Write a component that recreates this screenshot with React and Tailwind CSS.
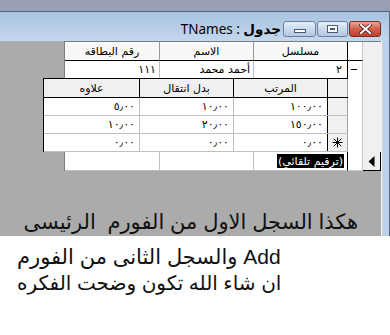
import React from "react";

function MinBtn() {
  return (
    <div className="w-[33px] h-[16px] rounded-[3px] border border-[#6d7f9b] bg-gradient-to-b from-[#e4edf7] via-[#cbdaec] to-[#b3c8e2] flex items-end justify-center pb-[3px]">
      <div className="w-[12px] h-[4px] bg-white border border-[#4a5a72]" />
    </div>
  );
}

function MaxBtn() {
  return (
    <div className="w-[31px] h-[16px] rounded-[3px] border border-[#6d7f9b] bg-gradient-to-b from-[#e4edf7] via-[#cbdaec] to-[#b3c8e2] flex items-center justify-center">
      <div className="w-[11px] h-[8px] bg-white border border-[#4a5a72] flex items-center justify-center">
        <div className="w-[5px] h-[2px] bg-[#4a5a72]" />
      </div>
    </div>
  );
}

function CloseBtn() {
  return (
    <div className="w-[32px] h-[16px] rounded-[3px] border border-[#7a2b22] bg-gradient-to-b from-[#e8a593] via-[#d0604c] to-[#bf3f2c] flex items-center justify-center">
      <svg width="13" height="10" viewBox="0 0 13 10">
        <path d="M2 1 L11 9 M11 1 L2 9" stroke="#5a1f18" strokeWidth="3.6" strokeLinecap="square" />
        <path d="M2 1 L11 9 M11 1 L2 9" stroke="#ffffff" strokeWidth="2" strokeLinecap="square" />
      </svg>
    </div>
  );
}

export default function App() {
  return (
    <div className="w-[390px] h-[335px] overflow-hidden bg-white [font-family:'DejaVu_Sans',sans-serif] text-black">
      {/* top strip */}
      <div className="h-[11px] bg-[#989fb5]" />
      {/* window */}
      <div className="h-[225px] flex flex-col border-t border-r border-[#56657a] bg-[#b9d1ea]">
        {/* title bar */}
        <div className="h-[29px] flex items-end pb-[4px] bg-gradient-to-b from-[#a7c2e0] to-[#c4d8ed]">
          <div className="w-[283px] flex justify-end pr-[2px]">
            <span dir="rtl" className="text-[13.5px] leading-[16px] text-black [font-family:'Noto_Sans','DejaVu_Sans',sans-serif] whitespace-nowrap">
              <b>جدول</b> : TNames
            </span>
          </div>
          <div className="flex gap-[1px]">
            <MinBtn />
            <MaxBtn />
            <CloseBtn />
          </div>
        </div>
        {/* content */}
        <div className="flex flex-1">
          <div className="w-[381px] bg-[#ababab] flex flex-col text-[11px] leading-none">
            {/* header row */}
            <div className="flex h-[20px]">
              <div className="w-[64px]" />
              <div className="flex border-t border-l border-[#7d7d7d] bg-white">
                <div className="w-[95px] flex items-center justify-center border-r border-b border-r-[#9a9a9a] border-b-black bg-[#f8f8f8]">رقم البطاقه</div>
                <div className="w-[94px] flex items-center justify-center border-r border-b border-r-[#9a9a9a] border-b-black bg-[#f8f8f8]">الاسم</div>
                <div className="w-[94px] flex items-center justify-center border-r border-b border-r-black border-b-black bg-[#f8f8f8]">مسلسل</div>
                <div className="w-[15px] border-r border-b border-r-[#c8c8c8] border-b-black bg-white" />
                <div className="w-[18px] bg-[#f0f0f0]" />
              </div>
            </div>
            {/* row 1 */}
            <div className="flex h-[17px]">
              <div className="w-[64px]" />
              <div className="flex border-l border-[#7d7d7d] bg-white">
                <div className="w-[95px] flex items-center justify-end pr-[3px] border-r border-[#c0c0c0]">١١١</div>
                <div dir="rtl" className="w-[94px] flex items-center justify-start pr-[3px] border-r border-[#c0c0c0]">أحمد محمد</div>
                <div className="w-[94px] flex items-center justify-end pr-[5px] border-r border-black">٢</div>
                <div className="w-[15px] flex items-center justify-start pl-[3px] border-r border-[#c8c8c8]">
                  <div className="w-[6px] h-[1px] bg-black" />
                </div>
                <div className="w-[18px] bg-[#f0f0f0]" />
              </div>
            </div>
            {/* sub datasheet */}
            <div className="flex h-[74px]">
              <div className="w-[43px]" />
              <div className="w-[305px] flex flex-col border-l border-black bg-white">
                <div className="flex h-[20px] border-t border-b border-black bg-[#f0f0f0]">
                  <div className="w-[96px] flex items-center justify-center border-r border-black">علاوه</div>
                  <div className="w-[94px] flex items-center justify-center border-r border-black">بدل انتقال</div>
                  <div className="w-[94px] flex items-center justify-center border-r border-black">المرتب</div>
                  <div className="w-[20px] border-r border-[#a0a0a0]" />
                </div>
                <div className="flex h-[18px] border-b border-[#c0c0c0]">
                  <div className="w-[96px] flex items-center justify-end pr-[4px] border-r border-[#c0c0c0]">٥٫٠٠</div>
                  <div className="w-[94px] flex items-center justify-end pr-[4px] border-r border-[#c0c0c0]">١٠٫٠٠</div>
                  <div className="w-[94px] flex items-center justify-end pr-[4px] border-r border-black">١٠٠٫٠٠</div>
                  <div className="w-[20px] bg-[#f0f0f0] border-r border-[#a0a0a0]" />
                </div>
                <div className="flex h-[18px] border-b border-[#c0c0c0]">
                  <div className="w-[96px] flex items-center justify-end pr-[4px] border-r border-[#c0c0c0]">١٠٫٠٠</div>
                  <div className="w-[94px] flex items-center justify-end pr-[4px] border-r border-[#c0c0c0]">٢٠٫٠٠</div>
                  <div className="w-[94px] flex items-center justify-end pr-[4px] border-r border-black">١٥٠٫٠٠</div>
                  <div className="w-[20px] bg-[#f0f0f0] border-r border-[#a0a0a0]" />
                </div>
                <div className="flex h-[18px] border-b border-[#c0c0c0]">
                  <div className="w-[96px] flex items-center justify-end pr-[4px] border-r border-[#c0c0c0]">٠٫٠٠</div>
                  <div className="w-[94px] flex items-center justify-end pr-[4px] border-r border-[#c0c0c0]">٠٫٠٠</div>
                  <div className="w-[94px] flex items-center justify-end pr-[4px] border-r border-black">٠٫٠٠</div>
                  <div className="w-[20px] bg-[#f0f0f0] border-r border-[#a0a0a0] flex items-center justify-center">
                    <svg width="11" height="11" viewBox="0 0 11 11">
                      <path d="M5.5 0.5 V10.5 M0.5 5.5 H10.5 M1.8 1.8 L9.2 9.2 M9.2 1.8 L1.8 9.2" stroke="#000" strokeWidth="1" />
                    </svg>
                  </div>
                </div>
              </div>
              <div className="w-[15px] bg-white border-r border-[#c8c8c8]" />
              <div className="w-[18px] bg-[#f0f0f0]" />
            </div>
            {/* new record row */}
            <div className="flex h-[19px]">
              <div className="w-[64px]" />
              <div className="flex border-l border-[#7d7d7d] bg-white">
                <div className="w-[95px] border-r border-b border-[#c0c0c0]" />
                <div className="w-[94px] border-r border-b border-[#c0c0c0]" />
                <div className="w-[94px] flex items-center justify-end pr-[3px] border-r border-b border-r-black border-b-[#c0c0c0]">
                  <span dir="rtl" className="bg-black text-white h-[14px] flex items-center px-[1px] whitespace-nowrap">(ترقيم تلقائي)</span>
                </div>
                <div className="w-[15px] border-r border-b border-[#c8c8c8]" />
                <div className="w-[18px] bg-[#f0f0f0] border-b border-r border-black flex items-center justify-center">
                  <svg width="7" height="11" viewBox="0 0 7 11">
                    <path d="M6.5 0 V11 L0.5 5.5 Z" fill="#000" />
                  </svg>
                </div>
              </div>
            </div>
            {/* remaining gray with text */}
            <div className="flex-1 flex items-end pb-[1px]">
              <div dir="rtl" className="w-full text-right pr-[23px] text-[21px] leading-[27px] whitespace-nowrap [font-family:'Liberation_Sans','DejaVu_Sans',sans-serif] text-[#111]">
                هكذا السجل الاول من الفورم&nbsp; الرئيسى
              </div>
            </div>
          </div>
          {/* right frame */}
          <div className="w-[8px] flex">
            <div className="w-[1px] bg-[#f4f4f4]" />
            <div className="w-[1px] bg-[#d4d4d4]" />
            <div className="flex-1 bg-[#b9d1ea]" />
          </div>
        </div>
      </div>
      {/* white text below */}
      <div className="pt-[7px] pl-[17px] text-[21px] leading-[27px] whitespace-nowrap [font-family:'Liberation_Sans','DejaVu_Sans',sans-serif] text-[#111]">
        <div dir="ltr">والسجل الثانى من الفورم Add</div>
        <div dir="ltr" className="text-[20px]">ان شاء الله تكون وضحت الفكره</div>
      </div>
    </div>
  );
}
